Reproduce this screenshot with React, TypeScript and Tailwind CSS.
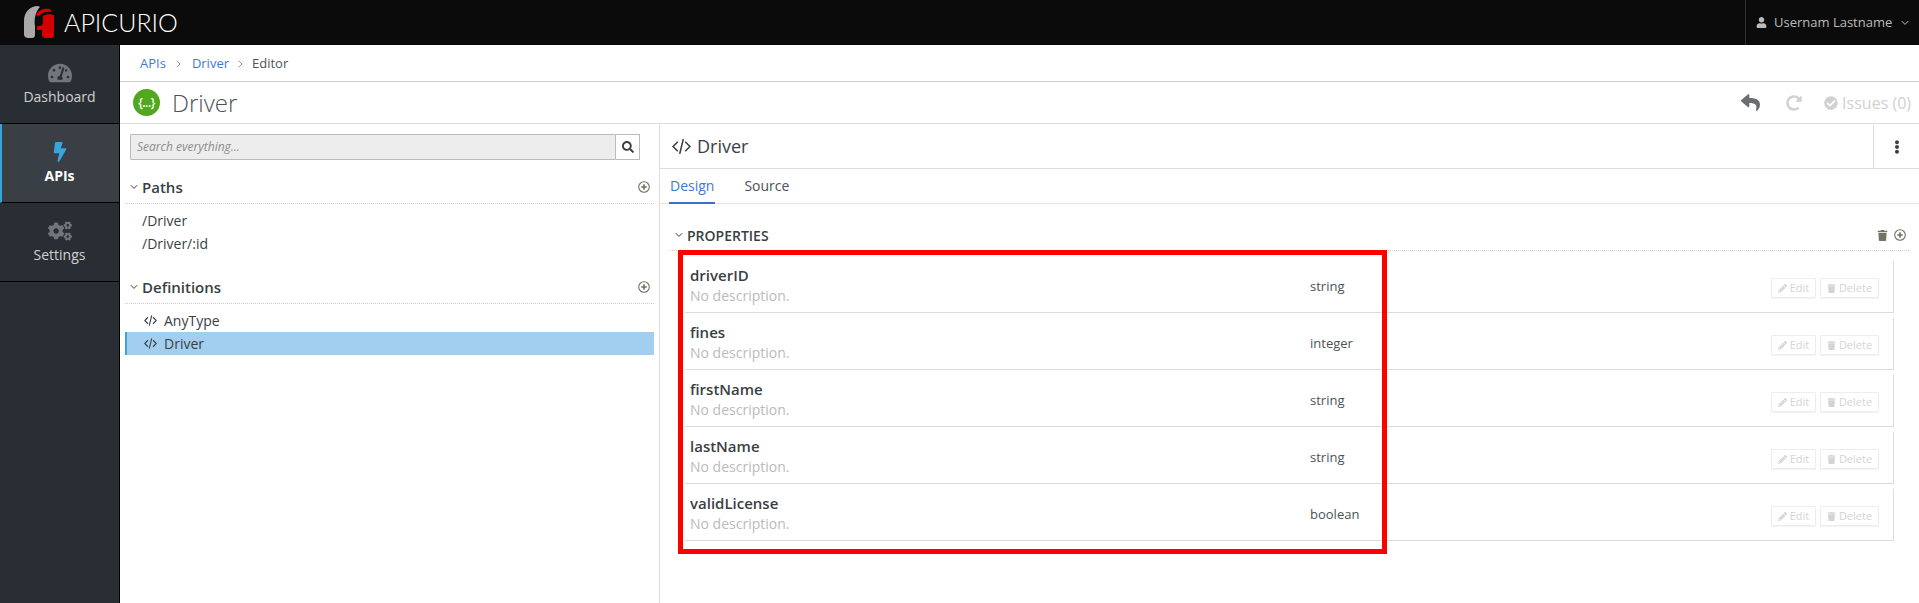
import { FaBolt, FaCheckCircle, FaCogs, FaEllipsisV, FaPencilAlt, FaRedoAlt, FaReply, FaSearch, FaTachometerAlt, FaTrash, FaUser } from 'react-icons/fa'

const properties = [
  { name: 'driverID', type: 'string' },
  { name: 'fines', type: 'integer' },
  { name: 'firstName', type: 'string' },
  { name: 'lastName', type: 'string' },
  { name: 'validLicense', type: 'boolean' },
]

// Apicurio mark: grey hood with a red helmet over it
function Logo() {
  return (
    <svg width="31" height="33" viewBox="0 0 31 33" className="shrink-0">
      <path d="M14 0 C5 0 0 7 0 15 L0 28 C0 31 2 32 5 32 L8 32 C10 32 11 31 11 28 L11 20 C10 14 11 6 16 1 Z" fill="#a9a9a9" />
      <path d="M12 9 C15 3 21 2 26 3 L28 6 C22 5 17 7 15 10 Z" fill="#d40000" />
      <path d="M19 10 C22 8 26 8 30 9 L30 29 C30 32 28 32 26 32 L22 32 C19 32 18 31 18 28 L18 24 L13 24 L13 19 C16 19 19 17 19 10 Z" fill="#d40000" />
      <circle cx="15" cy="16" r="4" fill="#0b0b0b" />
    </svg>
  )
}

function AddCircle() {
  return (
    <svg width="12" height="12" viewBox="0 0 12 12" className="shrink-0">
      <circle cx="6" cy="6" r="5.3" fill="none" stroke="#6f7563" strokeWidth="1.1" />
      <path d="M6 3.2v5.6M3.2 6h5.6" stroke="#6f7563" strokeWidth="1.6" />
    </svg>
  )
}

function CodeIcon({ size = 13 }: { size?: number }) {
  return (
    <svg width={size} height={size} viewBox="0 0 18 18" className="shrink-0" fill="none" stroke="#393f44" strokeWidth="1.5">
      <path d="M5.5 4.5 1 9l4.5 4.5M12.5 4.5 17 9l-4.5 4.5M10.7 2 7.3 16" />
    </svg>
  )
}

// thin angle used on the collapsible sections and the user menu
function Chevron({ className = '' }: { className?: string }) {
  return (
    <svg width="8" height="6" viewBox="0 0 8 6" className={`shrink-0 ${className}`} fill="none" stroke="currentColor" strokeWidth="1">
      <path d="M0.8 1.2 4 4.4l3.2-3.2" />
    </svg>
  )
}

function Crumb({ className = '' }: { className?: string }) {
  return (
    <svg width="5" height="8" viewBox="0 0 5 8" className={`shrink-0 ${className}`} fill="none" stroke="#999" strokeWidth="1">
      <path d="M0.8 0.8 4 4 0.8 7.2" />
    </svg>
  )
}

function SidebarItem({ label, active, children }: { label: string; active?: boolean; children: React.ReactNode }) {
  return (
    <div
      className={`h-[79px] border-b border-black flex flex-col items-center pt-[17px] ${
        active ? 'bg-[#393f44] border-l-2 border-l-[#39a5dc] pr-[2px] text-white font-bold' : 'text-[#d1d1d1]'
      }`}
    >
      <div className="h-[21px] flex items-center">{children}</div>
      <div className="text-[14px] leading-[20px] mt-[4px]">{label}</div>
    </div>
  )
}

function SectionHead({ title }: { title: string }) {
  return (
    <div className="h-[31px] ml-[5px] mr-[5px] border-b border-dotted border-[#ccc] flex items-center pl-[5px] pr-[4px] pb-[2px]">
      <Chevron className="text-[#393f44] mr-[4px]" />
      <span className="text-[15px] font-semibold text-[#393f44] flex-1">{title}</span>
      <AddCircle />
    </div>
  )
}

function ToolButton({ width, icon, label }: { width: string; icon: React.ReactNode; label: string }) {
  return (
    <div className={`${width} h-[20px] border border-[#ededed] rounded-[1px] shadow-[0_1px_1px_rgba(3,3,3,0.05)] flex items-center justify-center gap-[3px] text-[11px] text-[#d4d4d4]`}>
      {icon}
      {label}
    </div>
  )
}

function PropertyRow({ name, type }: { name: string; type: string }) {
  return (
    <div className="h-[57px] ml-[15px] flex items-end border-b border-[#dcdcdc]">
      <div className="flex-1 h-[57px] pl-[5px] pt-[10px]">
        <div className="text-[15px] leading-[20px] font-semibold text-[#393f44] mb-[1px]">{name}</div>
        <div className="text-[14px] leading-[20px] text-[#bbb]">No description.</div>
      </div>
      <div className="w-[461px] h-[57px] pt-[21px] text-[13px] leading-[20px] text-[#4d5258]">{type}</div>
      <div className="w-[123px] h-[51px] border-r border-[#dcdcdc] flex justify-end gap-[4px] pt-[17px] pr-[14px]">
        <ToolButton width="w-[45px]" icon={<FaPencilAlt className="text-[9px]" />} label="Edit" />
        <ToolButton width="w-[59px]" icon={<FaTrash className="text-[9px]" />} label="Delete" />
      </div>
    </div>
  )
}

export default function App() {
  return (
    <div className="h-[603px] overflow-hidden flex flex-col bg-white font-['Open_Sans',sans-serif]">
      <header className="h-[45px] shrink-0 bg-[#0b0b0b] flex items-center pl-[24px]">
        <Logo />
        <span className="ml-[9px] text-[25px] font-['Lato',sans-serif] font-light text-white flex-1">APICURIO</span>
        <div className="w-[174px] h-full border-l border-[#2f2f2f] flex items-center pl-[10px] text-[#bbb] text-[13px]">
          <FaUser className="text-[11px] mr-[7px]" />
          <span className="flex-1">Usernam Lastname</span>
          <Chevron className="mr-[10px]" />
        </div>
      </header>

      <div className="flex-1 flex min-h-0">
        <nav className="w-[120px] shrink-0 bg-[#292e34] border-r border-black">
          <SidebarItem label="Dashboard">
            <FaTachometerAlt className="text-[24px] text-[#72767b]" />
          </SidebarItem>
          <SidebarItem label="APIs" active>
            <FaBolt className="text-[20px] text-[#39a5dc]" />
          </SidebarItem>
          <SidebarItem label="Settings">
            <FaCogs className="text-[24px] text-[#72767b]" />
          </SidebarItem>
        </nav>

        <main className="flex-1 min-w-0 flex flex-col">
          <div className="h-[37px] shrink-0 border-b border-[#d1d1d1] flex items-center pl-[20px] pt-[1px] text-[13px] text-[#4d5258]">
            <span className="text-[#3f78d8]">APIs</span>
            <Crumb className="ml-[10px] mr-[11px]" />
            <span className="text-[#3f78d8]">Driver</span>
            <Crumb className="mx-[9px]" />
            <span>Editor</span>
          </div>

          <div className="h-[42px] shrink-0 border-b border-[#dcdcdc] flex items-center pl-[13px] pr-[8px]">
            <div className="w-[27px] h-[27px] rounded-full bg-[#4fa81e] flex items-center justify-center text-white text-[12px] font-semibold leading-none tracking-[-0.5px]">{'{...}'}</div>
            <h1 className="ml-[12px] text-[24px] font-light text-[#4d5258] flex-1">Driver</h1>
            <FaReply className="text-[19px] text-[#6a6e73]" />
            <FaRedoAlt className="text-[16px] text-[#d1d1d1] ml-[26px]" />
            <FaCheckCircle className="text-[14px] text-[#d1d1d1] ml-[22px]" />
            <span className="ml-[4px] text-[16px] text-[#d1d1d1]">Issues (0)</span>
          </div>

          <div className="flex-1 flex min-h-0">
            <section className="w-[540px] shrink-0 border-r border-[#dcdcdc] pt-[10px]">
              <div className="h-[26px] mx-[10px] w-[510px] flex">
                <div className="flex-1 bg-[#ededed] border border-[#bbb] rounded-l-[1px] pl-[6px] text-[12px] leading-[24px] italic text-[#8b8d8f]">Search everything...</div>
                <div className="w-[24px] border border-l-0 border-[#bbb] flex items-center justify-center rounded-r-[1px]">
                  <FaSearch className="text-[12px] text-[#393f44]" />
                </div>
              </div>
              <div className="mt-[13px]">
                <SectionHead title="Paths" />
                <div className="pt-[5px] pl-[22px] text-[14px] leading-[23px] text-[#393f44]">
                  <div>/Driver</div>
                  <div>/Driver/:id</div>
                </div>
              </div>
              <div className="mt-[18px]">
                <SectionHead title="Definitions" />
                <div className="pt-[5px] mx-[5px] text-[14px] leading-[23px] text-[#393f44]">
                  <div className="flex items-center gap-[7px] pl-[19px]">
                    <CodeIcon />
                    AnyType
                  </div>
                  <div className="flex items-center gap-[7px] pl-[17px] bg-[#a2cff0] border-l-2 border-[#39a5dc]">
                    <CodeIcon />
                    Driver
                  </div>
                </div>
              </div>
            </section>

            <section className="flex-1 min-w-0 relative">
              <div className="h-[45px] border-b border-[#dcdcdc] flex items-center pl-[12px] pt-[1px]">
                <CodeIcon size={19} />
                <span className="ml-[6px] text-[18px] text-[#393f44] flex-1">Driver</span>
                <div className="w-[46px] h-full border-l border-[#dcdcdc] flex items-center justify-center">
                  <FaEllipsisV className="text-[14px] text-[#393f44]" />
                </div>
              </div>
              <div className="h-[35px] border-b border-[#e5e5e5] flex pl-[9px] gap-[29px] text-[14px] leading-[34px]">
                <div className="h-[35px] border-b-2 border-[#3f6ec6] text-[#3f78d8] px-[1px]">Design</div>
                <div className="text-[#4d5258]">Source</div>
              </div>
              <div className="mt-[16px] mx-[10px] h-[31px] border-b border-dotted border-[#ccc] flex items-center pl-[5px] pr-[3px]">
                <Chevron className="text-[#393f44] mr-[4px]" />
                <span className="text-[14px] font-semibold text-[#393f44] flex-1">PROPERTIES</span>
                <FaTrash className="text-[11px] text-[#6f7563] mr-[6px]" />
                <AddCircle />
              </div>
              <div className="ml-[10px] mr-[25px] mt-[5px]">
                {properties.map(p => (
                  <PropertyRow key={p.name} name={p.name} type={p.type} />
                ))}
              </div>
              {/* red annotation drawn over the property rows */}
              <div className="absolute left-[18px] top-[126px] w-[709px] h-[304px] border-[5px] border-[#ff0000] pointer-events-none" />
            </section>
          </div>
        </main>
      </div>
    </div>
  )
}
